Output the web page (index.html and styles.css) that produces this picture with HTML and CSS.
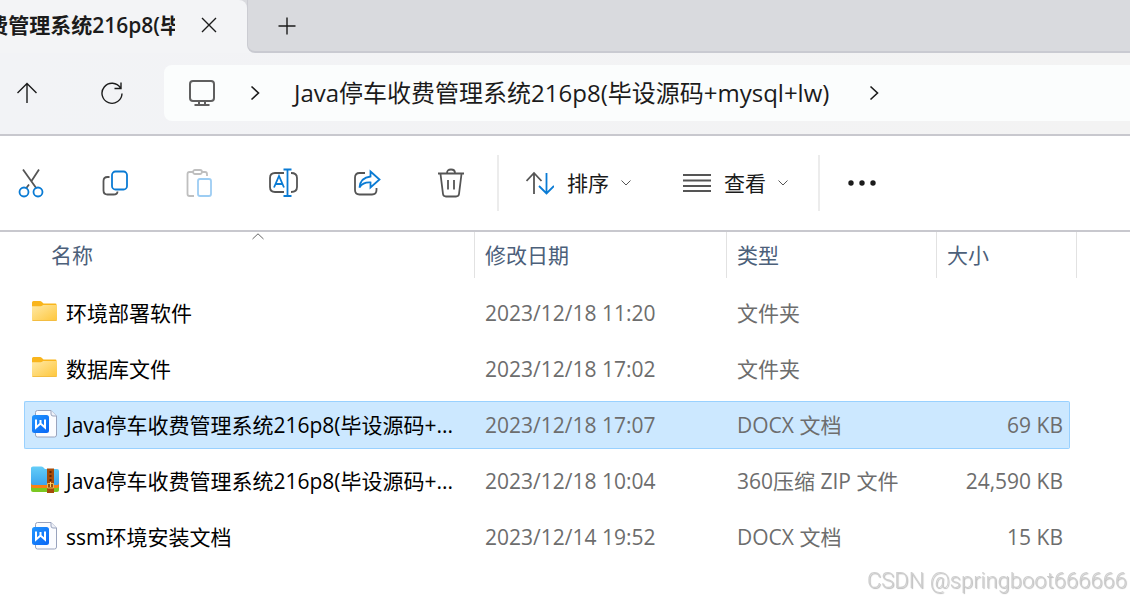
FILE: index.html
```html
<!DOCTYPE html>
<html lang="zh-CN">
<head>
<meta charset="utf-8">
<title>文件资源管理器</title>
<link rel="stylesheet" href="styles.css">
</head>
<body>
<svg class="defs" aria-hidden="true">
  <defs>
    <linearGradient id="folder-fill" x1="0" y1="0" x2="1" y2="1"><stop offset="0" stop-color="#ffe9a6"/><stop offset="1" stop-color="#fec63a"/></linearGradient>
    <linearGradient id="word-fill" x1="0" y1="0" x2="1" y2="1"><stop offset="0" stop-color="#2196ff"/><stop offset="1" stop-color="#0a66f5"/></linearGradient>
    <linearGradient id="zip-fill" x1="0" y1="0" x2="0" y2="1"><stop offset="0" stop-color="#64cdf8"/><stop offset="1" stop-color="#3ba5ee"/></linearGradient>
    <symbol id="folder" viewBox="0 0 28 28">
      <path d="M1 4.500Q1 3 2.500 3H9q1 0 1.700.7L12.500 5.500H24.500q1 0 1 1V11H1z" fill="#f9b51c"/>
      <path d="M1 8.200h8.700q1 0 1.700-.7l.8-.6H26v14.600q0 1.500-1.500 1.500h-22Q1 23 1 21.500z" fill="url(#folder-fill)"/>
      <path d="M1.500 22.500h24" stroke="#f3bd42"/>
    </symbol>
    <symbol id="docx" viewBox="0 0 28 28">
      <path d="M6.500.500H20L25.500 6v19q0 2-2 2h-17q-2 0-2-2V2.500q0-2 2-2z" fill="#fbfcff" stroke="#99a3bd"/>
      <path d="M20 .500V4q0 2 2 2h3.500" fill="#eef1f8" stroke="#99a3bd"/>
      <rect x="1" y="5" width="17" height="18" rx="2.500" fill="url(#word-fill)"/>
      <path d="M5 9.500v8l4.500-4 4.500 4v-8M9.500 10v3" fill="none" stroke="#fff" stroke-width="2"/>
    </symbol>
    <symbol id="zip" viewBox="0 0 28 28">
      <path d="M0 18h28v6q0 2-2 2H2q-2 0-2-2z" fill="#7bc822"/>
      <path d="M0 16h28v4q0 2-2 2H2q-2 0-2-2z" fill="#f98113"/>
      <path d="M0 2q0-1.500 2-1.500h8q1.500 0 2.500 1l1.500 1.500h12q2 0 2 2v12q0 2-2 2H2q-2 0-2-2z" fill="url(#zip-fill)"/>
      <path d="M16 2.500h7V27h-7z" fill="#a64b09"/>
      <path d="M19.500 5v12" stroke="#592604" stroke-width="2" stroke-dasharray="2 2"/>
      <path d="M16.500 17.500h6v4.500h-6z" fill="#96500f" stroke="#efb74d"/>
      <path d="M19.500 16v5" stroke="#ffd36a"/>
    </symbol>
  </defs>
</svg>

<header class="tabs">
  <div class="tab">
    <div class="tab-clip"><span class="tab-title">费管理系统216p8(毕</span></div>
    <button class="icon-button" type="button" aria-label="关闭标签页"><svg width="16" height="16" viewBox="0 0 16 16"><path d="M1 1l14 14M15 1L1 15"/></svg></button>
  </div>
  <div class="strip">
    <button class="icon-button" type="button" aria-label="新建标签页"><svg width="18" height="18" viewBox="0 0 18 18"><path d="M9 .500v17M.500 9h17"/></svg></button>
  </div>
</header>

<nav class="address-row">
  <button class="icon-button" type="button" aria-label="向上"><svg width="22" height="22" viewBox="0 0 22 22"><path d="M11 21V1.500M1.500 11L11 1.500l9.500 9.500"/></svg></button>
  <button class="icon-button" type="button" aria-label="刷新"><svg width="24" height="24" viewBox="0 0 24 24"><path d="M20.500 7A10 10 0 1 0 22 12.500M21 1.500v6h-6.500"/></svg></button>
  <div class="address">
    <svg class="monitor" width="28" height="28" viewBox="0 0 28 28"><rect x="2" y="2" width="24" height="20" rx="3"/><path d="M11 22v4M17 22v4M6.500 26h15"/></svg>
    <svg class="chevron" width="10" height="16" viewBox="0 0 10 16"><path d="M1.500 1.500L8.500 8l-7 6.500"/></svg>
    <span class="path">Java停车收费管理系统216p8(毕设源码+mysql+lw)</span>
    <svg class="chevron" width="10" height="16" viewBox="0 0 10 16"><path d="M1.500 1.500L8.500 8l-7 6.500"/></svg>
  </div>
</nav>

<div class="toolbar">
  <div class="group">
    <button class="tool" type="button" aria-label="剪切"><svg width="28" height="30" viewBox="0 0 28 30"><path d="M6 1.500L19.500 20.500M22 1.500L14.500 13M12 16.500L9 20.500"/><g class="blue"><circle cx="7" cy="24" r="4.500"/><circle cx="21" cy="24" r="4.500"/></g></svg></button>
    <button class="tool" type="button" aria-label="复制"><svg width="28" height="30" viewBox="0 0 28 30"><path d="M8.500 9H6.500q-4 0-4 4v9.500q0 4 4 4h6q4 0 4-3"/><rect class="blue" x="11" y="3.500" width="15" height="18" rx="3.500"/></svg></button>
    <button class="tool" type="button" aria-label="粘贴" disabled><svg width="28" height="30" viewBox="0 0 28 30"><path d="M9 28H4.500q-2 0-2-2V6q0-2 2-2H8M17 4h3q2 0 2 2v2"/><rect x="8" y="2" width="9" height="4" rx="2"/><rect class="blue" x="13" y="11" width="13" height="17" rx="2"/></svg></button>
    <button class="tool" type="button" aria-label="重命名"><svg width="30" height="30" viewBox="0 0 30 30"><path d="M16 5H7Q2 5 2 10v9q0 5 5 5h9M23 5q6 0 6 5v9q0 5-6 5"/><path class="blue" d="M6 19.500L11 8l5 11.500M7.500 16h7M15.500 1.500h8M19.500 1.500v27M15.500 28h8"/></svg></button>
    <button class="tool" type="button" aria-label="共享"><svg width="28" height="30" viewBox="0 0 28 30"><path d="M12 5H6.500Q2 5 2 9.500V22q0 4.500 4.500 4.500H19q4.500 0 4.500-4.500v-2"/><path class="blue" d="M17.500 3.500L26.500 11.500l-9 8v-5Q10 14 6.500 19.500 7.500 9.500 17.500 8.500z"/></svg></button>
    <button class="tool" type="button" aria-label="删除"><svg width="28" height="30" viewBox="0 0 28 30"><path d="M1 5.500h26M10 5q0-3.500 4-3.500T18 5M3.500 6l2.500 20q.3 2.500 3 2.500h10q2.700 0 3-2.500L24.500 6M11 12v9.500M17 12v9.500"/></svg></button>
  </div>
  <div class="group menus">
    <button class="menu" type="button"><svg width="28" height="24" viewBox="0 0 28 24"><path d="M8 23V2M.500 10L8 2l7.500 8"/><path class="blue" d="M20.500 2v20.500M13 15l7.500 7.500L28 15"/></svg><span>排序</span><svg class="caret" width="10" height="6" viewBox="0 0 10 6"><path d="M.500.500L5 5l4.500-4.500"/></svg></button>
    <button class="menu" type="button"><svg width="28" height="24" viewBox="0 0 28 24"><path d="M0 4h28M0 9.500h28M0 15h28M0 20h28"/></svg><span>查看</span><svg class="caret" width="10" height="6" viewBox="0 0 10 6"><path d="M.500.500L5 5l4.500-4.500"/></svg></button>
  </div>
  <button class="more" type="button" aria-label="更多"><svg width="28" height="6" viewBox="0 0 28 6"><circle cx="3" cy="3" r="2.700"/><circle cx="14" cy="3" r="2.700"/><circle cx="25" cy="3" r="2.700"/></svg></button>
</div>

<main>
  <table class="files">
    <colgroup><col class="c-name"><col class="c-date"><col class="c-type"><col class="c-size"><col class="c-end"></colgroup>
    <thead>
      <tr>
        <th><div class="head first">名称<svg class="sort-mark" width="12" height="7" viewBox="0 0 12 7"><path d="M.500 6L6 .800 11.500 6"/></svg></div></th>
        <th><div class="head">修改日期</div></th>
        <th><div class="head">类型</div></th>
        <th colspan="2"><div class="head last">大小</div></th>
      </tr>
    </thead>
    <tbody>
      <tr><td><div class="name"><svg><use href="#folder"/></svg><span>环境部署软件</span></div></td><td>2023/12/18 11:20</td><td>文件夹</td><td></td></tr>
      <tr><td><div class="name"><svg><use href="#folder"/></svg><span>数据库文件</span></div></td><td>2023/12/18 17:02</td><td>文件夹</td><td></td></tr>
      <tr class="selected"><td><div class="name"><svg><use href="#docx"/></svg><span>Java停车收费管理系统216p8(毕设源码+...</span></div></td><td>2023/12/18 17:07</td><td>DOCX 文档</td><td>69 KB</td></tr>
      <tr><td><div class="name"><svg><use href="#zip"/></svg><span>Java停车收费管理系统216p8(毕设源码+...</span></div></td><td>2023/12/18 10:04</td><td>360压缩 ZIP 文件</td><td>24,590 KB</td></tr>
      <tr><td><div class="name"><svg><use href="#docx"/></svg><span>ssm环境安装文档</span></div></td><td>2023/12/14 19:52</td><td>DOCX 文档</td><td>15 KB</td></tr>
    </tbody>
  </table>
</main>
<div class="watermark">CSDN @springboot666666</div>
</body>
</html>
```
FILE: styles.css
```css
* { box-sizing: border-box; }
body {
  margin: 0;
  min-height: 100vh;
  overflow: hidden;
  background: #fff;
  color: #1b1b1b;
  font: 21px/28px "Open Sans", "Noto Sans CJK SC", sans-serif;
}
button {
  display: flex;
  align-items: center;
  padding: 0;
  border: 0;
  background: none;
  color: inherit;
  font: inherit;
}
svg { display: block; flex: none; fill: none; stroke: currentColor; }
.defs { position: absolute; width: 0; height: 0; }

.tabs {
  display: flex;
  height: 53px;
  background: linear-gradient(90deg, #f3f4f6 255px, #d9dade 255px);
}
.tab {
  display: flex;
  align-items: center;
  justify-content: space-between;
  width: 247px;
  padding: 0 30px 3px 0;
  border-top-right-radius: 8px;
  background: #f3f4f6;
  box-shadow: 8px -8px 0 #d9dade;
}
.tab-clip { display: flex; justify-content: flex-end; width: 175px; overflow: hidden; }
.tab-title { flex: none; margin-right: -6px; font-weight: 600; white-space: nowrap; }
.strip {
  display: flex;
  flex: 1;
  padding-left: 30px;
  border-left: 1px solid #cbccd2;
  border-bottom: 2px solid #c9cad1;
  border-bottom-left-radius: 8px;
  background: #d9dade;
}
.icon-button svg { stroke-width: 1.4; }

.address-row {
  display: flex;
  align-items: center;
  gap: 60px;
  height: 83px;
  padding: 0 0 2px 16px;
  border-bottom: 2px solid #c8c8ce;
  background: linear-gradient(90deg, #f2f3f6, #f3f3f3);
}
.address-row .icon-button + .icon-button { margin-left: 2px; }
.address {
  display: flex;
  align-items: center;
  flex: 1;
  height: 56px;
  margin-left: -20px;
  padding-left: 24px;
  border-radius: 8px 0 0 8px;
  background: #fbfdfd;
}
.monitor { margin-right: 34px; stroke: #5f5f5f; stroke-width: 2; }
.chevron { stroke-width: 1.6; }
.path { margin: 0 40px 0 34px; font-size: 24px; line-height: 32px; white-space: nowrap; }

.toolbar {
  display: flex;
  align-items: center;
  height: 96px;
  border-bottom: 2px solid #c8c8ce;
}
.group {
  display: flex;
  align-items: center;
  gap: 56px;
  height: 56px;
  padding: 0 32px 0 17px;
  border-right: 2px solid #ececec;
}
.tool { width: 28px; justify-content: center; color: #555; }
.tool svg, .menu svg { stroke-width: 1.8; }
.tool:disabled { color: #bfbfbf; }
.tool:disabled .blue { stroke: #9dcdf3; }
.blue { stroke: #0a7bd4; }
.menus { gap: 52px; padding: 0 30px 0 27px; }
.menu { gap: 13px; }
.menu > svg:first-child { color: #555; }
.menu .caret { margin-left: -1px; stroke-width: 1; color: #555; }
.more { margin-left: 28px; }
.more svg { fill: currentColor; stroke: none; }

.files {
  table-layout: fixed;
  width: 1053px;
  margin: -8px 0 0 24px;
  border-spacing: 0 8px;
  color: #6d6d6d;
}
.c-name { width: 451px; }
.c-date { width: 252px; }
.c-type { width: 210px; }
.c-size { width: 133px; }
.c-end { width: 7px; }
th { height: 49px; padding: 0; vertical-align: top; font-weight: 400; text-align: left; }
.head {
  position: relative;
  height: 46px;
  padding: 9px 0 0 10px;
  border-right: 1px solid #e2e2e2;
  color: #4c607a;
}
.head.first { padding-left: 27px; }
.sort-mark { position: absolute; top: 1px; left: 228px; color: #666; }
td {
  height: 48px;
  padding: 0 0 0 10px;
  border: 1px solid transparent;
  border-width: 1px 0;
  white-space: nowrap;
}
td:first-child { padding-left: 6px; border-left-width: 1px; }
td:last-child { padding: 0 6px 0 0; border-right-width: 1px; text-align: right; }
.name { display: flex; align-items: center; gap: 7px; color: #000; }
.name svg { width: 28px; height: 28px; margin-bottom: 2px; stroke: none; }
.selected td { border-color: #99d1ff; background: #cce8ff; }
.selected td:first-child { border-radius: 2px 0 0 2px; }
.selected td:last-child { border-radius: 0 2px 2px 0; }

.watermark {
  position: fixed;
  right: 3px;
  bottom: 6px;
  color: #cfcfcf;
  font: 22px/28px Roboto, sans-serif;
  font-weight: 300;
  text-shadow: 1px 1px 1px #bbb;
}
```
